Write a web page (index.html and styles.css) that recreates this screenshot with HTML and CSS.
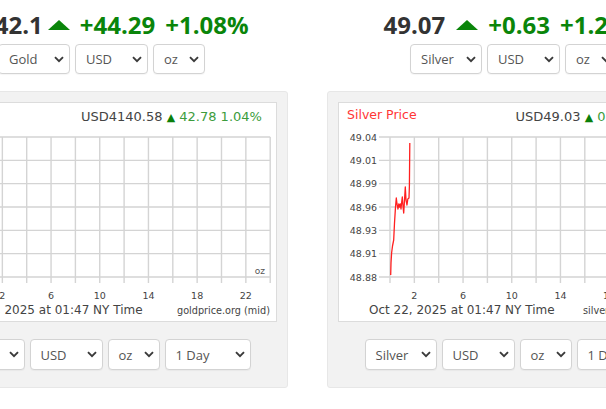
FILE: index.html
```html
<!DOCTYPE html>
<html lang="en">
<head>
<meta charset="utf-8">
<title>Gold and Silver Price</title>
<link rel="stylesheet" href="styles.css">
</head>
<body>
<div class="wrap">
  <section class="col">
    <div class="quote quote-gold">
      <span class="price">4,142.1</span>
      <svg class="up" viewBox="0 0 22 10" width="22" height="10"><path d="M11 0L22 10H0Z" fill="#0a850a"/></svg>
      <span class="chg">+44.29</span>
      <span class="chg">+1.08%</span>
    </div>
    <div class="sels">
      <div class="sel w-metal">Gold<svg class="chev" viewBox="0 0 10 7" width="10" height="7"><path d="M1 1.2L5 5.2L9 1.2"/></svg></div>
      <div class="sel w-cur">USD<svg class="chev" viewBox="0 0 10 7" width="10" height="7"><path d="M1 1.2L5 5.2L9 1.2"/></svg></div>
      <div class="sel w-unit">oz<svg class="chev" viewBox="0 0 10 7" width="10" height="7"><path d="M1 1.2L5 5.2L9 1.2"/></svg></div>
    </div>
    <div class="panel">
      <div class="chart">
        <svg class="plot" viewBox="0 0 349 218" width="349" height="218">
          <text class="title gold" x="8" y="16">Gold Price</text>
          <text class="head" x="154" y="18"><tspan class="hp">USD4140.58 </tspan><tspan class="ha">▲</tspan><tspan class="hc"> 42.78 1.04%</tspan></text>
          <path class="grid" d="M51 34V180M75.35 34V180M99.7 34V180M124.05 34V180M148.4 34V180M172.75 34V180M197.1 34V180M221.45 34V180M245.8 34V180M270.15 34V180M294.5 34V180M318.85 34V180M343.2 34V180M40 34H343.2M40 57.33H343.2M40 80.67H343.2M40 104H343.2M40 127.33H343.2M40 150.67H343.2M40 174H343.2"/>
          <g class="ylab">
            <text x="38" y="37.5">4142</text>
            <text x="38" y="60.8">4130</text>
            <text x="38" y="84.2">4118</text>
            <text x="38" y="107.5">4106</text>
            <text x="38" y="130.8">4094</text>
            <text x="38" y="154.2">4082</text>
            <text x="38" y="177.5">4070</text>
          </g>
          <g class="xlab">
            <text x="75.35" y="196">2</text>
            <text x="124.05" y="196">6</text>
            <text x="172.75" y="196">10</text>
            <text x="221.45" y="196">14</text>
            <text x="270.15" y="196">18</text>
            <text x="318.85" y="196">22</text>
          </g>
          <path class="line goldline" d="M51.5 150L54 140L57 126L60 118L63 112L66 98L69 70L71.5 40"/>
          <text class="unit" x="338" y="171">oz</text>
          <text class="stamp" x="30" y="211">Oct 22, 2025 at 01:47 NY Time</text>
          <text class="src" x="250" y="210.5">goldprice.org (mid)</text>
        </svg>
      </div>
      <div class="sels bottom">
        <div class="sel w-metal">Gold<svg class="chev" viewBox="0 0 10 7" width="10" height="7"><path d="M1 1.2L5 5.2L9 1.2"/></svg></div>
        <div class="sel w-cur">USD<svg class="chev" viewBox="0 0 10 7" width="10" height="7"><path d="M1 1.2L5 5.2L9 1.2"/></svg></div>
        <div class="sel w-unit">oz<svg class="chev" viewBox="0 0 10 7" width="10" height="7"><path d="M1 1.2L5 5.2L9 1.2"/></svg></div>
        <div class="sel w-range">1 Day<svg class="chev" viewBox="0 0 10 7" width="10" height="7"><path d="M1 1.2L5 5.2L9 1.2"/></svg></div>
      </div>
    </div>
  </section>

  <section class="col">
    <div class="quote">
      <span class="price">49.07</span>
      <svg class="up" viewBox="0 0 22 10" width="22" height="10"><path d="M11 0L22 10H0Z" fill="#0a850a"/></svg>
      <span class="chg">+0.63</span>
      <span class="chg">+1.29%</span>
    </div>
    <div class="sels">
      <div class="sel w-metal">Silver<svg class="chev" viewBox="0 0 10 7" width="10" height="7"><path d="M1 1.2L5 5.2L9 1.2"/></svg></div>
      <div class="sel w-cur">USD<svg class="chev" viewBox="0 0 10 7" width="10" height="7"><path d="M1 1.2L5 5.2L9 1.2"/></svg></div>
      <div class="sel w-unit">oz<svg class="chev" viewBox="0 0 10 7" width="10" height="7"><path d="M1 1.2L5 5.2L9 1.2"/></svg></div>
    </div>
    <div class="panel">
      <div class="chart">
        <svg class="plot" viewBox="0 0 349 218" width="349" height="218">
          <text class="title silver" x="8" y="16">Silver Price</text>
          <text class="head" x="176.5" y="18"><tspan class="hp">USD49.03 </tspan><tspan class="ha">▲</tspan><tspan class="hc"> 0.63 1.30%</tspan></text>
          <path class="grid" d="M51 34V180M75.35 34V180M99.7 34V180M124.05 34V180M148.4 34V180M172.75 34V180M197.1 34V180M221.45 34V180M245.8 34V180M270.15 34V180M294.5 34V180M318.85 34V180M343.2 34V180M40 34H343.2M40 57.33H343.2M40 80.67H343.2M40 104H343.2M40 127.33H343.2M40 150.67H343.2M40 174H343.2"/>
          <g class="ylab">
            <text x="38" y="37.5">49.04</text>
            <text x="38" y="60.8">49.01</text>
            <text x="38" y="84.2">48.99</text>
            <text x="38" y="107.5">48.96</text>
            <text x="38" y="130.8">48.93</text>
            <text x="38" y="154.2">48.91</text>
            <text x="38" y="177.5">48.88</text>
          </g>
          <g class="xlab">
            <text x="75.35" y="196">2</text>
            <text x="124.05" y="196">6</text>
            <text x="172.75" y="196">10</text>
            <text x="221.45" y="196">14</text>
            <text x="270.15" y="196">18</text>
            <text x="318.85" y="196">22</text>
          </g>
          <path class="line silverline" d="M51.7 172L52 160L52.6 150L53.5 143L54.7 137L55.5 120L56.5 104L57.3 95L58 101L59 106L59.8 101L60.5 104L61.3 101L62 106L62.7 99L63.3 94L64 103L64.7 110L65.4 99L66.3 84L67 97L68 102L68.8 96L70 95L70.4 83L70.8 40"/>
          <text class="unit" x="338" y="171">oz</text>
          <text class="stamp" x="30" y="211">Oct 22, 2025 at 01:47 NY Time</text>
          <text class="src" x="244" y="210.5">silverprice.org (mid)</text>
        </svg>
      </div>
      <div class="sels bottom">
        <div class="sel w-metal">Silver<svg class="chev" viewBox="0 0 10 7" width="10" height="7"><path d="M1 1.2L5 5.2L9 1.2"/></svg></div>
        <div class="sel w-cur">USD<svg class="chev" viewBox="0 0 10 7" width="10" height="7"><path d="M1 1.2L5 5.2L9 1.2"/></svg></div>
        <div class="sel w-unit">oz<svg class="chev" viewBox="0 0 10 7" width="10" height="7"><path d="M1 1.2L5 5.2L9 1.2"/></svg></div>
        <div class="sel w-range">1 Day<svg class="chev" viewBox="0 0 10 7" width="10" height="7"><path d="M1 1.2L5 5.2L9 1.2"/></svg></div>
      </div>
    </div>
  </section>
</div>
</body>
</html>
```

FILE: styles.css
```css
html, body {
  margin: 0;
  padding: 0;
  background: #fff;
  overflow: hidden;
}

body {
  font-family: "Open Sans", "Liberation Sans", sans-serif;
  color: #333;
}

.wrap {
  display: flex;
  gap: 39px;
  margin-left: -85px;
  width: max-content;
}

.col {
  flex: none;
  width: 373px;
}

.quote {
  display: flex;
  justify-content: center;
  align-items: center;
  padding-top: 9px;
  height: 32px;
  line-height: 32px;
  font-size: 24px;
  font-weight: 700;
  white-space: nowrap;
}

.price {
  color: #333;
}

.up {
  display: block;
  margin: 0 10px 0 11px;
}

.quote-gold .price {
  padding-left: 6px;
}

.quote-gold .up {
  margin-left: 5px;
}

.chg {
  color: #0a850a;
}

.chg + .chg {
  margin-left: 10px;
}

.sels {
  display: flex;
  justify-content: center;
  gap: 5px;
  margin-top: 3px;
}

.sel {
  box-sizing: border-box;
  height: 30px;
  display: flex;
  align-items: center;
  justify-content: space-between;
  padding: 0 5px 0 10px;
  background: #fff;
  border: 1px solid #d3d3d3;
  border-radius: 4px;
  box-shadow: 0 1px 1px rgba(0, 0, 0, 0.04);
  font-size: 13px;
  color: #555;
}

.chev {
  display: block;
  fill: none;
  stroke: #3a3a3a;
  stroke-width: 1.9;
}

.w-metal { width: 72px; }
.w-cur { width: 73px; }
.w-unit { width: 52px; }
.w-range { width: 86px; }

.panel {
  box-sizing: border-box;
  margin-top: 17px;
  padding: 10px 10px 17px;
  background: #f2f2f2;
  border: 1px solid #e7e7e7;
  border-radius: 3px;
}

.chart {
  background: #fff;
  border: 1px solid #dcdcdc;
  height: 218px;
}

.plot {
  display: block;
  font-family: "DejaVu Sans", "Liberation Sans", sans-serif;
}

.sels.bottom {
  margin-top: 17px;
}

.sels.bottom .sel {
  height: 31px;
}

.grid {
  fill: none;
  stroke: #d4d4d4;
  stroke-width: 1.4;
}

.title {
  font-size: 12.5px;
}

.title.silver { fill: #ff3535; }
.title.gold { fill: #d4a017; }

.head {
  font-size: 13px;
}

.hp { fill: #444; }
.ha { fill: #0a7f0a; font-size: 11px; }
.hc { fill: #3c9c3c; }

.ylab text {
  font-size: 9.5px;
  fill: #444;
  text-anchor: end;
}

.xlab text {
  font-size: 9.5px;
  fill: #444;
  text-anchor: middle;
}

.line {
  fill: none;
  stroke-width: 1.3;
  stroke-linejoin: round;
}

.silverline { stroke: #ff2020; }
.goldline { stroke: #e0a800; }

.unit {
  font-size: 9px;
  fill: #555;
  text-anchor: end;
}

.stamp {
  font-size: 12px;
  fill: #444;
}

.src {
  font-size: 9.7px;
  fill: #444;
}
```
